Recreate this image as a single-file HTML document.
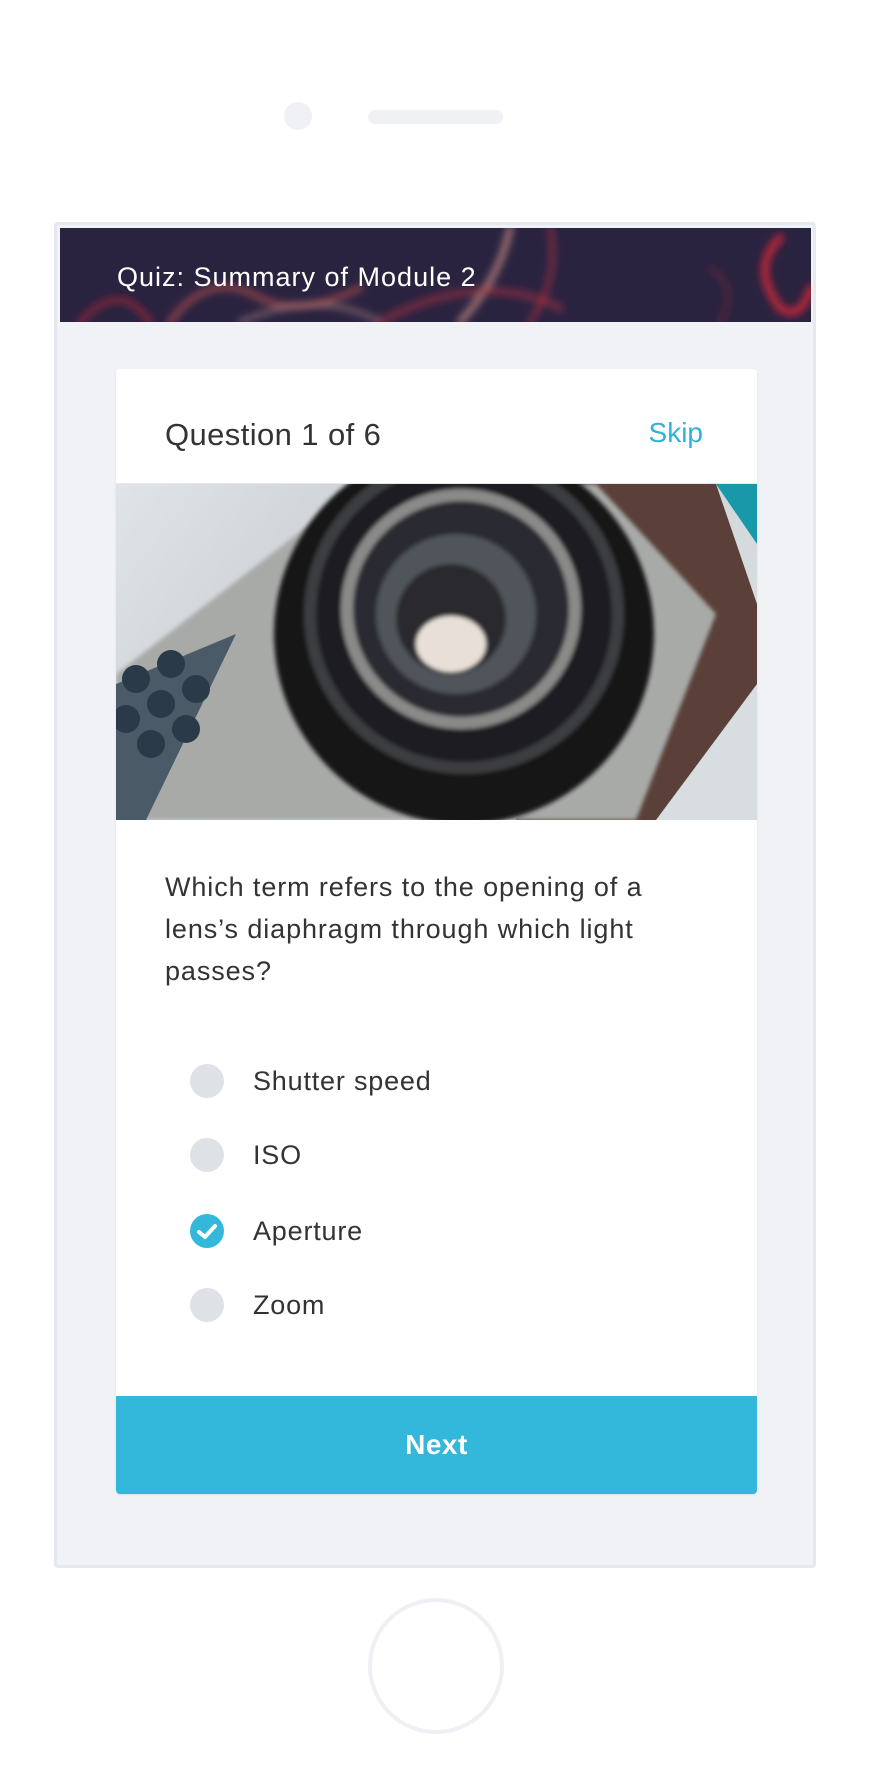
<!DOCTYPE html>
<html><head><meta charset="utf-8"><style>
*{margin:0;padding:0;box-sizing:border-box}
body{width:870px;height:1776px;background:#fff;position:relative;overflow:hidden;font-family:"Liberation Sans",sans-serif}
.abs{position:absolute}
.opt{font-size:27px;color:#333;letter-spacing:0.8px;white-space:nowrap}
</style></head><body>
<div class="abs" style="left:284px;top:102px;width:28px;height:28px;border-radius:50%;background:#eff1f5"></div>
<div class="abs" style="left:368px;top:110px;width:135px;height:14px;border-radius:7px;background:#eff1f5"></div>
<div class="abs" style="left:54px;top:222px;width:762px;height:1346px;background:#f0f2f6;border:3px solid #e5e8ee;border-radius:4px"></div>
<div class="abs" style="left:60px;top:228px;width:751px;height:94px;overflow:hidden;background:#2a2340">
<svg width="751" height="94" style="position:absolute;left:0;top:0">
<defs><filter id="b"><feGaussianBlur stdDeviation="4"/></filter></defs>
<g filter="url(#b)" fill="none" stroke-linecap="round">
<path d="M20 94 Q60 50 90 94" stroke="#c02a38" stroke-width="6" opacity=".6"/>
<path d="M110 94 Q150 40 200 70 Q240 90 300 60" stroke="#d8584e" stroke-width="6" opacity=".6"/>
<path d="M180 94 Q260 60 320 94" stroke="#f0b0a0" stroke-width="4" opacity=".5"/>
<path d="M450 0 Q440 50 400 94" stroke="#e8a090" stroke-width="6" opacity=".7"/>
<path d="M490 0 Q500 50 470 94" stroke="#c83040" stroke-width="5" opacity=".6"/>
<path d="M320 94 Q420 40 500 80" stroke="#b83040" stroke-width="8" opacity=".5"/>
<path d="M720 10 Q690 40 720 80 Q740 94 751 60" stroke="#e02838" stroke-width="8" opacity=".8"/>
<path d="M650 40 Q680 60 660 94" stroke="#802838" stroke-width="5" opacity=".5"/>
</g></svg>
<div class="abs" style="left:57px;top:34px;color:#fff;font-size:27px;letter-spacing:1px;white-space:nowrap">Quiz: Summary of Module 2</div>
</div>
<div class="abs" style="left:116px;top:369px;width:641px;height:1125px;background:#fff;border-radius:4px;box-shadow:0 1px 2px rgba(0,0,0,.08);overflow:hidden">
<div class="abs" style="left:49px;top:48px;font-size:31px;letter-spacing:0.4px;color:#333;white-space:nowrap">Question 1 of 6</div>
<div class="abs" style="right:54px;top:48px;font-size:28px;color:#33b0d8">Skip</div>
<div class="abs" style="left:0;top:114px;width:641px;height:1px;background:#e6e8ec"></div>
<svg class="abs" style="left:0;top:115px" width="641" height="336">
<defs>
<linearGradient id="bg" x1="0" y1="0" x2="1" y2="0.4"><stop offset="0" stop-color="#dfe4e8"/><stop offset=".5" stop-color="#c8ccd0"/><stop offset="1" stop-color="#d8dde0"/></linearGradient>
<filter id="s"><feGaussianBlur stdDeviation="2"/></filter>
</defs>
<rect width="641" height="336" fill="url(#bg)"/>
<polygon points="600,0 641,0 641,60" fill="#1898a8"/>
<polygon points="440,0 600,0 641,120 641,200 540,336 400,336" fill="#5a4038"/>
<polygon points="0,190 220,20 380,0 480,0 600,130 520,336 0,336" fill="#a8aaa8" filter="url(#s)"/>
<polygon points="0,200 120,150 30,336 0,336" fill="#4a5a66"/>
<g fill="#2a3a48">
<circle cx="20" cy="195" r="14"/><circle cx="55" cy="180" r="14"/><circle cx="10" cy="235" r="14"/><circle cx="45" cy="220" r="14"/><circle cx="80" cy="205" r="14"/><circle cx="35" cy="260" r="14"/><circle cx="70" cy="245" r="14"/>
</g>
<g filter="url(#s)">
<circle cx="348" cy="150" r="190" fill="#141416"/>
<circle cx="348" cy="130" r="160" fill="#3a3c40"/>
<circle cx="348" cy="130" r="148" fill="#1a1c20"/>
<circle cx="345" cy="125" r="120" fill="#8a8a88"/>
<circle cx="345" cy="125" r="108" fill="#2a2c30"/>
<circle cx="340" cy="130" r="80" fill="#50545a"/>
<circle cx="335" cy="135" r="55" fill="#2a2c2e"/>
<ellipse cx="335" cy="160" rx="35" ry="28" fill="#e8e0d8"/>
</g>
</svg>
<div class="abs" style="left:49px;top:497px;font-size:27px;letter-spacing:0.9px;line-height:42px;color:#333;white-space:nowrap">Which term refers to the opening of a<br>lens’s diaphragm through which light<br>passes?</div>
<div class="abs" style="left:74px;top:695px;width:34px;height:34px;border-radius:50%;background:#dee1e6"></div>
<div class="abs opt" style="left:137px;top:697px">Shutter speed</div>
<div class="abs" style="left:74px;top:769px;width:34px;height:34px;border-radius:50%;background:#dee1e6"></div>
<div class="abs opt" style="left:137px;top:771px">ISO</div>
<div class="abs" style="left:74px;top:845px;width:34px;height:34px;border-radius:50%;background:#33b8db"></div>
<svg class="abs" style="left:74px;top:845px" width="34" height="34"><path d="M9 18 L15 23 L25 12" stroke="#fff" stroke-width="4" fill="none" stroke-linecap="round" stroke-linejoin="round"/></svg>
<div class="abs opt" style="left:137px;top:847px">Aperture</div>
<div class="abs" style="left:74px;top:919px;width:34px;height:34px;border-radius:50%;background:#dee1e6"></div>
<div class="abs opt" style="left:137px;top:921px">Zoom</div>
<div class="abs" style="left:0;top:1027px;width:641px;height:98px;background:#33b8db;color:#fff;font-weight:bold;font-size:28px;letter-spacing:0.5px;text-align:center;line-height:98px">Next</div>
</div>
<div class="abs" style="left:368px;top:1598px;width:136px;height:136px;border-radius:50%;border:4px solid #eef0f4"></div>
</body></html>
